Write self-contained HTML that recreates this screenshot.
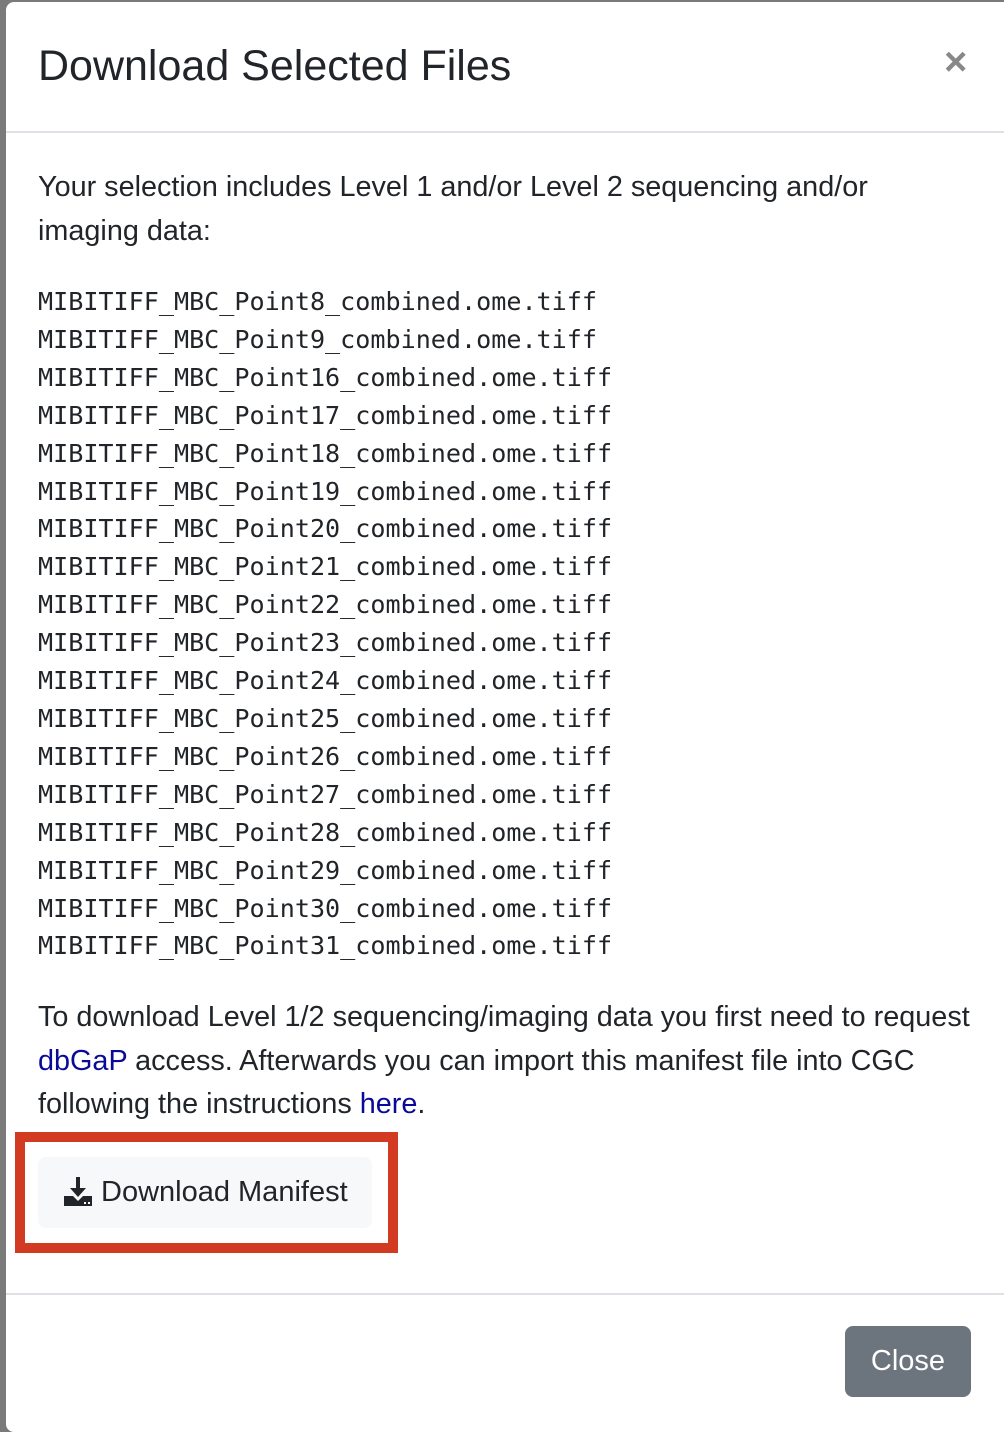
<!DOCTYPE html>
<html><head><meta charset="utf-8"><style>
html,body{margin:0;padding:0}
body{width:1004px;height:1416px;background:#7a7a7a;position:relative;overflow:hidden;font-family:"Liberation Sans",sans-serif;color:#212529}
.modal{position:absolute;left:6px;top:2px;width:1010px;height:1430px;background:#fff;border-radius:8px}
.title{position:absolute;left:32px;top:38px;font-size:43px;line-height:52px;margin:0;font-weight:normal;white-space:nowrap}
.x{position:absolute;left:938px;top:38px;font-size:40px;font-weight:bold;color:#888}
.hb{position:absolute;left:0;right:0;top:129px;border-top:2px solid #dee2e6}
.p{position:absolute;left:32px;font-size:28.8px;line-height:43.5px;width:980px;white-space:nowrap}
.mono{position:absolute;left:32px;top:281px;font-family:"DejaVu Sans Mono","Liberation Mono",monospace;font-size:25.1px;line-height:37.9px;white-space:pre}
a{color:#0a0a9a;text-decoration:none}
.red{position:absolute;left:9px;top:1130px;width:363px;height:101px;border:10px solid #d33a22}
.btn{position:absolute;left:32px;top:1155px;width:334px;height:71px;background:#f7f8fa;border-radius:8px;font-size:29px;line-height:71px}
.fb{position:absolute;left:0;right:0;top:1291px;border-top:2px solid #dee2e6}
.close{position:absolute;left:839px;top:1324px;width:126px;height:71px;background:#6c757d;border-radius:8px;color:#fff;font-size:29px;line-height:71px;text-align:center}
</style></head><body>
<div class="modal">
<h1 class="title">Download Selected Files</h1>
<div class="x">×</div>
<div class="hb"></div>
<div class="p" style="top:164px">Your selection includes Level 1 and/or Level 2 sequencing and/or<br>imaging data:</div>
<div class="mono">MIBITIFF_MBC_Point8_combined.ome.tiff
MIBITIFF_MBC_Point9_combined.ome.tiff
MIBITIFF_MBC_Point16_combined.ome.tiff
MIBITIFF_MBC_Point17_combined.ome.tiff
MIBITIFF_MBC_Point18_combined.ome.tiff
MIBITIFF_MBC_Point19_combined.ome.tiff
MIBITIFF_MBC_Point20_combined.ome.tiff
MIBITIFF_MBC_Point21_combined.ome.tiff
MIBITIFF_MBC_Point22_combined.ome.tiff
MIBITIFF_MBC_Point23_combined.ome.tiff
MIBITIFF_MBC_Point24_combined.ome.tiff
MIBITIFF_MBC_Point25_combined.ome.tiff
MIBITIFF_MBC_Point26_combined.ome.tiff
MIBITIFF_MBC_Point27_combined.ome.tiff
MIBITIFF_MBC_Point28_combined.ome.tiff
MIBITIFF_MBC_Point29_combined.ome.tiff
MIBITIFF_MBC_Point30_combined.ome.tiff
MIBITIFF_MBC_Point31_combined.ome.tiff</div>
<div class="p" style="top:994px">To download Level 1/2 sequencing/imaging data you first need to request<br><a>dbGaP</a> access. Afterwards you can import this manifest file into CGC<br>following the instructions <a>here</a>.</div>
<div class="red"></div>
<div class="btn"><svg style="position:absolute;left:25px;top:20px" width="30" height="30" viewBox="0 0 30 30"><rect x="13" y="0" width="4" height="13" fill="#212529"/><path d="M7 11h16l-8 9z" fill="#212529"/><path d="M1 19h9l5 5 5-5h9v10H1z" fill="#212529"/><rect x="21" y="25" width="2" height="2" fill="#fff"/><rect x="25" y="25" width="2" height="2" fill="#fff"/></svg><span style="position:absolute;left:63px">Download Manifest</span></div>
<div class="fb"></div>
<div class="close">Close</div>
</div>
</body></html>
